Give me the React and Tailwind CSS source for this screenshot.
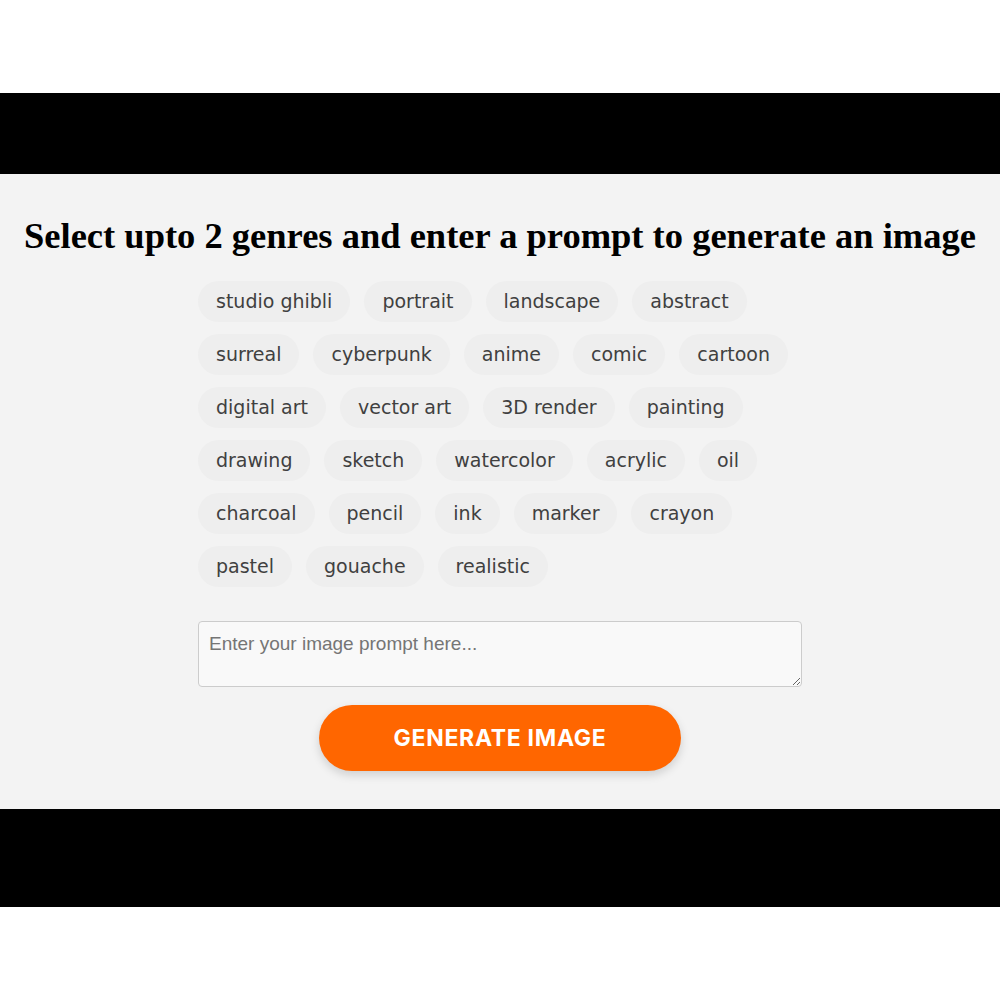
import React from "react";

const rows = [
  ["studio ghibli", "portrait", "landscape", "abstract"],
  ["surreal", "cyberpunk", "anime", "comic", "cartoon"],
  ["digital art", "vector art", "3D render", "painting"],
  ["drawing", "sketch", "watercolor", "acrylic", "oil"],
  ["charcoal", "pencil", "ink", "marker", "crayon"],
  ["pastel", "gouache", "realistic"],
];

export default function App() {
  return (
    <div className="w-[1000px] h-[1000px] bg-white flex flex-col">
      <div className="h-[93px] bg-white" />
      <div className="h-[81px] bg-black" />
      <main className="h-[635px] bg-[#f3f3f3] flex flex-col items-center pt-[38px]">
        <h1 className="text-[36.5px] leading-[48px] font-bold text-black [font-family:'Liberation_Serif',serif]">
          Select upto 2 genres and enter a prompt to generate an image
        </h1>
        <div className="w-[604px] mt-[21px] flex flex-col gap-y-[12px]">
          {rows.map((row, i) => (
            <div key={i} className="flex gap-x-[14px]">
              {row.map((g) => (
                <button
                  key={g}
                  className="h-[41px] px-[18px] rounded-full bg-[#eeeeee] text-[#404040] text-[19px] [font-family:'DejaVu_Sans',sans-serif]"
                >
                  {g}
                </button>
              ))}
            </div>
          ))}
        </div>
        <textarea
          placeholder="Enter your image prompt here..."
          className="mt-[34px] w-[604px] h-[66px] rounded-[4px] border border-[#cccccc] bg-[#f9f9f9] px-[10px] py-[8px] text-[19px] text-[#333] placeholder:text-[#757575] [font-family:'Liberation_Sans',Arial,sans-serif] outline-none"
        />
        <button className="mt-[18px] w-[362px] h-[66px] rounded-full bg-[#ff6600] text-white text-[23px] font-bold tracking-[0.7px] shadow-[0_4px_10px_rgba(0,0,0,0.15)] [font-family:Inter,sans-serif]">
          GENERATE IMAGE
        </button>
      </main>
      <div className="h-[98px] bg-black" />
      <div className="flex-1 bg-white" />
    </div>
  );
}
